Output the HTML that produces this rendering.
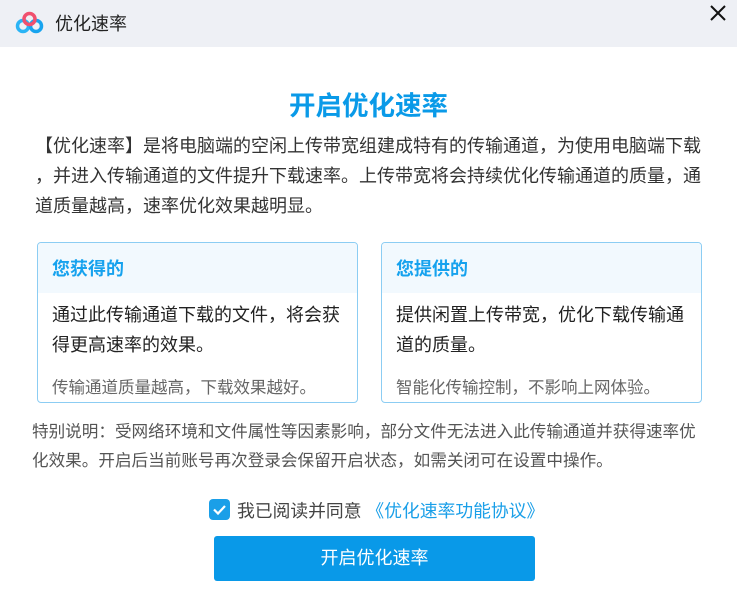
<!DOCTYPE html>
<html><head><meta charset="utf-8"><style>
*{margin:0;padding:0;box-sizing:border-box}
body{width:737px;height:601px;background:#fff;font-family:"Liberation Sans","Noto Sans CJK SC",sans-serif;position:relative;overflow:hidden;color:#333}
.bar{position:absolute;left:0;top:0;width:737px;height:47px;background:#eef0f5}
.t{position:absolute;white-space:nowrap}
.box{position:absolute;top:242px;width:321px;height:161px;border:1px solid #8ccdf3;border-radius:4px;overflow:hidden}
.box .h{height:50px;background:#f2f9fe;color:#16a2ee;font-weight:bold;font-size:18px;padding:12px 0 0 14px}
.box .c{font-size:18px;line-height:30px;padding:7px 0 0 14px;color:#222}
.box .d{font-size:16.5px;color:#666;padding:14px 0 0 14px}
</style></head><body>
<div class="bar"></div>
<svg class="t" style="left:15px;top:11px" width="30" height="24" viewBox="0 0 30 24">
<circle cx="8" cy="15" r="5.5" fill="none" stroke="#2ab4f5" stroke-width="3.5"/>
<circle cx="21" cy="15" r="5.5" fill="none" stroke="#18a4ef" stroke-width="3.5"/>
<circle cx="14.5" cy="8" r="5.5" fill="none" stroke="#f0506e" stroke-width="3.5"/>
</svg>
<div class="t" style="left:55px;top:10px;font-size:18px;color:#222">优化速率</div>
<svg class="t" style="left:709px;top:4px" width="18" height="18" viewBox="0 0 18 18"><path d="M2 2L16 16M16 2L2 16" stroke="#111" stroke-width="2"/></svg>
<div class="t" style="left:0;width:737px;text-align:center;top:84px;font-size:26.5px;font-weight:bold;color:#0a9ae8">开启优化速率</div>
<div class="t" style="left:35px;top:131px;font-size:18px;line-height:30px;color:#333">【优化速率】是将电脑端的空闲上传带宽组建成特有的传输通道，为使用电脑端下载<br>，并进入传输通道的文件提升下载速率。上传带宽将会持续优化传输通道的质量，通<br>道质量越高，速率优化效果越明显。</div>
<div class="box" style="left:37px"><div class="h">您获得的</div><div class="c">通过此传输通道下载的文件，将会获<br>得更高速率的效果。</div><div class="d">传输通道质量越高，下载效果越好。</div></div>
<div class="box" style="left:381px"><div class="h">您提供的</div><div class="c">提供闲置上传带宽，优化下载传输通<br>道的质量。</div><div class="d">智能化传输控制，不影响上网体验。</div></div>
<div class="t" style="left:32px;top:417px;font-size:16.6px;line-height:29px;color:#555">特别说明：受网络环境和文件属性等因素影响，部分文件无法进入此传输通道并获得速率优<br>化效果。开启后当前账号再次登录会保留开启状态，如需关闭可在设置中操作。</div>
<div class="t" style="left:209px;top:499px;width:21px;height:21px;background:#1a9fe8;border-radius:4px"><svg width="21" height="21" viewBox="0 0 21 21"><path d="M5 10.5L9 14.5L16 7" stroke="#fff" stroke-width="2.2" fill="none"/></svg></div>
<div class="t" style="left:237px;top:497px;font-size:17.8px;color:#444">我已阅读并同意 <span style="color:#1a9fe8">《优化速率功能协议》</span></div>
<div class="t" style="left:214px;top:536px;width:321px;height:45px;background:#0999e8;border-radius:3px;color:#fff;font-size:18px;text-align:center;line-height:45px">开启优化速率</div>
</body></html>
